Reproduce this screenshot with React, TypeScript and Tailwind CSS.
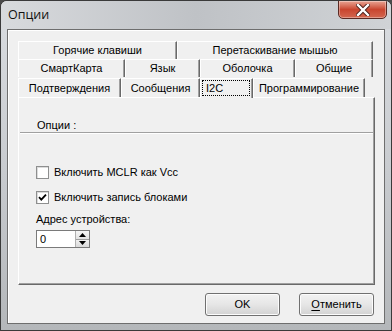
import React from "react";

function Tab({ w, label, selected }: { w: number; label: string; selected?: boolean }) {
  if (selected) {
    return (
      <div
        className="relative z-10 h-[20px] -mb-px bg-[#f0f0f0] border-t border-l border-white border-r border-r-[#696969] shadow-[inset_-1px_0_0_#a0a0a0] flex items-stretch p-[1px] pr-[2px] pb-[2px]"
        style={{ width: w }}
      >
        <div className="flex-1 border border-dotted border-black flex items-center pl-[3px] leading-none">{label}</div>
      </div>
    );
  }
  return (
    <div
      className="h-full bg-[#f0f0f0] border-t border-l border-white border-r border-r-[#696969] shadow-[inset_-1px_0_0_#a0a0a0] flex items-center justify-center leading-none"
      style={{ width: w }}
    >
      {label}
    </div>
  );
}

function CheckBox({ checked, label }: { checked?: boolean; label: string }) {
  return (
    <div className="flex items-center h-[13px] gap-[5px]">
      <div className="w-[13px] h-[13px] bg-white border border-[#8e8f8f] shadow-[inset_1px_1px_0_#dcdcdc] flex items-center justify-center">
        {checked && (
          <svg width="9" height="9" viewBox="0 0 9 9">
            <path d="M1 4.2 L3.3 6.6 L8 1.6" stroke="#000" strokeWidth="1.8" fill="none" />
          </svg>
        )}
      </div>
      <span className="leading-none">{label}</span>
    </div>
  );
}

export default function App() {
  return (
    <div className="w-[392px] h-[331px] bg-[#4a4a4a] [font-family:'Liberation_Sans',Arial,sans-serif] text-[11px] text-black">
      <div className="w-full h-full rounded-t-[7px] border border-[#3a3a3a] bg-gradient-to-b from-[#dadde1] via-[#c9ccd0] to-[#b4b7ba] flex flex-col overflow-hidden">
        {/* Title bar */}
        <div className="h-[28px] flex items-start justify-between relative bg-gradient-to-r from-[#d8dadd] via-[#bfc2c6] to-[#d0d3d6]">
          <div className="pl-[7px] pt-[7px] text-[12.5px] leading-[14px] [font-family:'Open_Sans','Liberation_Sans',sans-serif] text-[#111]">Опции</div>
          <div className="mr-[4px] -mt-px w-[49px] h-[19px] rounded-b-[5px] border border-[#5a2a24] bg-gradient-to-b from-[#e8a393] via-[#c9452f] to-[#d3664f] flex items-center justify-center shadow-[inset_0_0_0_1px_rgba(255,255,255,0.35)]">
            <svg width="14" height="12" viewBox="0 0 14 12">
              <path d="M2 1 L12 11 M12 1 L2 11" stroke="#4a1f1a" strokeWidth="4.2" strokeLinecap="square" />
              <path d="M2 1 L12 11 M12 1 L2 11" stroke="#ffffff" strokeWidth="2.4" strokeLinecap="square" />
            </svg>
          </div>
        </div>
        {/* Client */}
        <div className="flex-1 mx-[6px] mb-[6px] border border-[#6e6e6e] bg-[#f0f0f0] shadow-[inset_1px_1px_0_#ffffff] flex flex-col pl-[10px] pr-[10px] pt-[11px]">
          {/* tab rows */}
          <div className="flex flex-col w-[356px]">
            <div className="flex h-[18px]">
              <Tab w={159} label="Горячие клавиши" />
              <Tab w={196} label="Перетаскивание мышью" />
            </div>
            <div className="flex h-[18px]">
              <Tab w={107} label="СмартКарта" />
              <Tab w={75} label="Язык" />
              <Tab w={95} label="Оболочка" />
              <Tab w={78} label="Общие" />
            </div>
            <div className="flex h-[20px] items-end">
              <div className="flex h-[19px] items-end">
                <Tab w={103} label="Подтверждения" />
                <Tab w={79} label="Сообщения" />
              </div>
              <Tab w={53} label="I2C" selected />
              <div className="flex h-[19px]">
                <Tab w={112} label="Программирование" />
              </div>
            </div>
          </div>
          {/* panel */}
          <div className="w-[357px] h-[188px] border-t border-l border-white border-r border-b border-r-[#696969] border-b-[#696969] shadow-[inset_-1px_-1px_0_#a0a0a0] flex flex-col">
            <div className="pt-[21px] pl-[18px] h-[34px] leading-[13px]">Опции :</div>
            <div className="mx-px h-[2px] border-t border-[#a0a0a0] border-b border-b-white" />
            <div className="pl-[17px] mt-[32px]">
              <CheckBox label="Включить MCLR как Vcc" />
            </div>
            <div className="pl-[17px] mt-[12px]">
              <CheckBox checked label="Включить запись блоками" />
            </div>
            <div className="pl-[17px] mt-[9px] h-[13px] leading-[13px]">Адрес устройства:</div>
            <div className="pl-[17px] mt-[4px]">
              <div className="flex w-[54px] h-[18px] border border-[#7a7a7a] bg-white">
                <div className="flex-1 pl-[3px] flex items-center leading-none">0</div>
                <div className="w-[14px] flex flex-col border-l border-[#b0b0b0] bg-[#ececec]">
                  <div className="flex-1 flex items-center justify-center border-b border-[#a0a0a0] bg-gradient-to-b from-[#f6f6f6] to-[#e2e2e2]">
                    <svg width="7" height="4" viewBox="0 0 7 4"><path d="M0 4 L3.5 0 L7 4 Z" fill="#000" /></svg>
                  </div>
                  <div className="flex-1 flex items-center justify-center bg-gradient-to-b from-[#f0f0f0] to-[#dadada]">
                    <svg width="7" height="4" viewBox="0 0 7 4"><path d="M0 0 L3.5 4 L7 0 Z" fill="#000" /></svg>
                  </div>
                </div>
              </div>
            </div>
          </div>
          {/* buttons */}
          <div className="flex justify-end gap-[19px] pr-[1px] mt-[8px] w-[357px]">
            <button className="w-[75px] h-[23px] rounded-[3px] border border-[#707070] bg-gradient-to-b from-[#f2f2f2] via-[#e6e6e6] to-[#d2d2d2] shadow-[inset_0_0_0_1px_#fcfcfc] leading-none">
              OK
            </button>
            <button className="w-[75px] h-[23px] rounded-[3px] border border-[#707070] bg-gradient-to-b from-[#f2f2f2] via-[#e6e6e6] to-[#d2d2d2] shadow-[inset_0_0_0_1px_#fcfcfc] leading-none">
              <span className="underline underline-offset-2">О</span>тменить
            </button>
          </div>
        </div>
      </div>
    </div>
  );
}
